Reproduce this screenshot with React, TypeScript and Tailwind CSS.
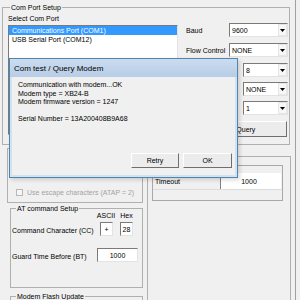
import React from "react";

const sunken =
  "bg-white border border-t-[#7a7a7a] border-l-[#7a7a7a] border-r-[#e3e3e3] border-b-[#e3e3e3]";
const grp = "border border-[#b0b0b0]";

function Combo({ value, w }: { value: string; w: string }) {
  return (
    <div className={`${w} h-[14px] ${sunken} flex items-center`}>
      <span className="pl-[2px] flex-1 leading-[9px]">{value}</span>
      <svg width="9" height="12" viewBox="0 0 9 12" className="shrink-0">
        <rect x="0.5" y="0.5" width="8" height="11" fill="#f7f7f7" stroke="#e6e6e6" />
        <path d="M2 5h5l-2.5 3z" fill="#000" />
      </svg>
    </div>
  );
}

function Legend({ text, left }: { text: string; left: string }) {
  return (
    <span className={`absolute ${left} top-[-5px] px-[1px] bg-[#f0f0f0] leading-[9px]`}>{text}</span>
  );
}

function Btn({ label, w }: { label: string; w: string }) {
  return (
    <div
      className={`${w} h-[15px] flex items-center justify-center bg-[#ececec] border border-t-white border-l-white border-r-[#6f6f6f] border-b-[#6f6f6f] leading-[9px]`}
    >
      {label}
    </div>
  );
}

export default function App() {
  return (
    <div className="w-[300px] h-[300px] bg-[#f0f0f0] relative overflow-hidden flex text-[7px] leading-[9px] text-black font-['Liberation_Sans',Arial,sans-serif]">
      <div className="w-[295px] flex flex-col shrink-0">
        {/* Com Port Setup */}
        <div className={`ml-[2px] mt-[7px] w-[288px] h-[138px] ${grp} relative flex shrink-0`}>
          <Legend text="Com Port Setup" left="left-[7px]" />
          <div className="ml-[5px] mt-[6px] w-[170px] flex flex-col">
            <span className="leading-[9px]">Select Com Port</span>
            <div className={`mt-[2px] h-[110px] ${sunken} flex flex-col`}>
              <div className="h-[9px] bg-[#3399ff] text-white pl-[3px] leading-[9px]">
                Communications Port (COM1)
              </div>
              <div className="h-[9px] pl-[3px] leading-[9px]">USB Serial Port (COM12)</div>
            </div>
          </div>
          <div className="ml-[8px] mt-[15px] w-[102px] flex flex-col">
            <div className="h-[14px] flex items-center justify-between">
              <span>Baud</span>
              <Combo value="9600" w="w-[59px]" />
            </div>
            <div className="mt-[6px] h-[14px] flex items-center justify-between">
              <span>Flow Control</span>
              <Combo value="NONE" w="w-[59px]" />
            </div>
            <div className="mt-[6px] h-[14px] flex items-center justify-between">
              <span>Data Bits</span>
              <Combo value="8" w="w-[45px]" />
            </div>
            <div className="mt-[5px] h-[14px] flex items-center justify-between">
              <span>Parity</span>
              <Combo value="NONE" w="w-[45px]" />
            </div>
            <div className="mt-[5px] h-[14px] flex items-center justify-between">
              <span>Stop Bits</span>
              <Combo value="1" w="w-[45px]" />
            </div>
            <div className="mt-[6px] w-[101px] h-[16px] flex items-center justify-center bg-[#ececec] border border-t-white border-l-white border-r-[#6f6f6f] border-b-[#6f6f6f]">
              Test / Query
            </div>
          </div>
        </div>

        {/* lower region */}
        <div className="flex">
          <div className="ml-[7px] w-[136px] flex flex-col shrink-0">
            <div className={`mt-[3px] h-[55px] ${grp} flex flex-col justify-end pb-[5px] pl-[8px]`}>
              <div className="flex items-center h-[9px]">
                <div className="w-[7px] h-[7px] border border-[#b8b8b8] bg-[#f6f6f6]" />
                <span className="ml-[4px] text-[#a3a3a3]">Use escape characters (ATAP = 2)</span>
              </div>
            </div>
            <div className={`ml-[3px] mt-[5px] w-[133px] h-[80px] ${grp} relative flex flex-col shrink-0`}>
              <Legend text="AT command Setup" left="left-[5px]" />
              <div className="mt-[2px] flex justify-end pr-[9px] gap-[7px]">
                <span className="w-[14px] flex justify-center">ASCII</span>
                <span className="w-[13px] flex justify-center">Hex</span>
              </div>
              <div className="mt-[2px] flex items-end justify-between pr-[9px] pl-[1px]">
                <span className="leading-[9px] mb-[1px]">Command Character (CC)</span>
                <div className="flex gap-[7px]">
                  <div className={`w-[13px] h-[14px] ${sunken} flex items-center justify-center`}>+</div>
                  <div className={`w-[13px] h-[14px] ${sunken} flex items-center justify-center`}>28</div>
                </div>
              </div>
              <div className="mt-[12px] flex items-end justify-between pr-[4px] pl-[1px]">
                <span className="leading-[9px] mb-[1px]">Guard Time Before (BT)</span>
                <div className={`w-[41px] h-[14px] ${sunken} flex items-center justify-center`}>1000</div>
              </div>
            </div>
            <div className={`ml-[3px] mt-[8px] w-[133px] h-[30px] ${grp} relative shrink-0`}>
              <Legend text="Modem Flash Update" left="left-[5px]" />
            </div>
          </div>

          <div className="ml-[4px] w-[144px] shrink-0">
            <div className={`mt-[11px] h-[160px] ${grp} relative`}>
              <div className="ml-[4px] mt-[8px] w-[131px] h-[36px] border border-[#a8a8a8] flex flex-col">
                <div className="h-[7px] flex">
                  <div className="w-[68px] border-r border-[#a8a8a8]" />
                </div>
                <div className="h-[17px] flex border-b border-[#dcdcdc]">
                  <div className="w-[68px] border-r border-[#808080] flex items-center pl-[2px]">Timeout</div>
                  <div className="w-[60px] bg-white flex items-center justify-center pr-[4px]">1000</div>
                </div>
              </div>
            </div>
          </div>
        </div>
      </div>
      <div className="w-px h-full bg-[#a0a0a0] shrink-0" />
      <div className="flex-1 bg-[#f0f0f0]" />

      {/* Dialog */}
      <div className="absolute left-[9px] top-[58px] w-[229px] h-[120px] border border-[#4f86ad] bg-[#d3e2f2] flex flex-col shadow-[2px_2px_4px_rgba(0,0,0,0.15)]">
        <div className="h-[18px] bg-gradient-to-b from-[#cbdcef] to-[#b7cde6] flex items-center pl-[4px] text-[8px]">
          Com test / Query Modem
        </div>
        <div className="flex-1 mx-[2px] mb-[2px] bg-[#f0f0f0] flex flex-col">
          <div className="pt-[4px] pl-[6px] flex flex-col leading-[8.5px]">
            <span>Communication with modem...OK</span>
            <span>Modem type = XB24-B</span>
            <span>Modem firmware version = 1247</span>
            <span className="h-[8.5px]" />
            <span>Serial Number = 13A200408B9A68</span>
          </div>
          <div className="mt-auto mb-[7px] flex justify-end gap-[4px] pr-[3px]">
            <Btn label="Retry" w="w-[48px]" />
            <Btn label="OK" w="w-[49px]" />
          </div>
        </div>
      </div>
    </div>
  );
}
